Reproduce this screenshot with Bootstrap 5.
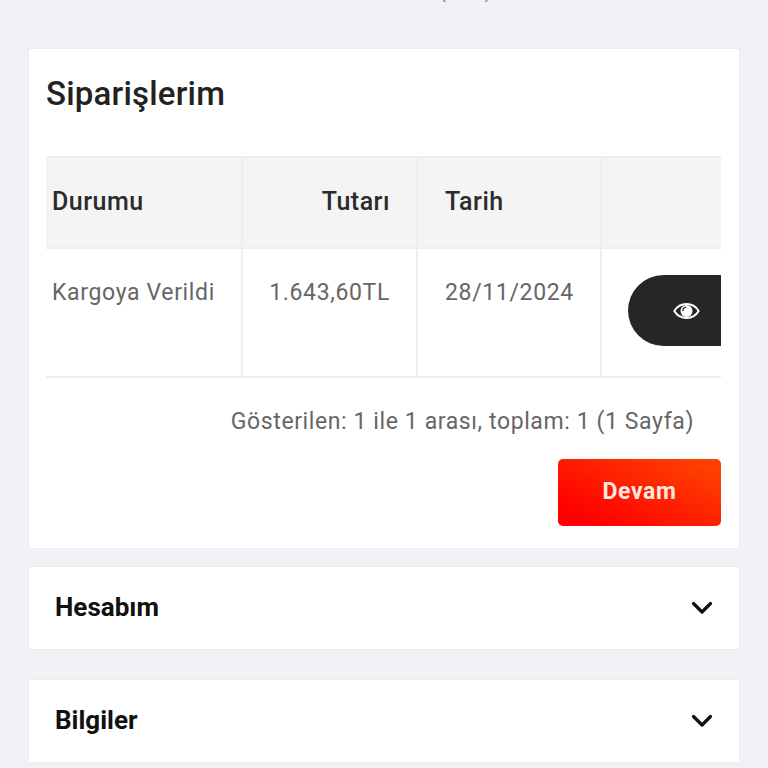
<!DOCTYPE html>
<html lang="tr">
<head>
    <meta charset="UTF-8">
    <meta name="viewport" content="width=device-width, initial-scale=1.0">
    <title>Siparişlerim</title>
    <link href="https://cdn.jsdelivr.net/npm/bootstrap@5.3.0/dist/css/bootstrap.min.css" rel="stylesheet">
    <style>
        html, body {
            height: 768px;
            overflow: hidden;
        }
        body {
            background: #f1f2f6;
            font-family: Roboto, "Liberation Sans", sans-serif;
            padding: 0 28px 0 28px;
        }
        .top-cut {
            height: 2px;
            margin-bottom: 46px;
            padding-left: 412px;
            gap: 37px;
            overflow: hidden;
            font-size: 20px;
            line-height: 20px;
            color: #888;
        }
        .panel-box {
            background: #fff;
            border: 1px solid #ebecef;
            border-radius: 2px;
        }
        .orders-box {
            height: 501px;
            padding: 0 17px;
            margin-bottom: 17px;
        }
        .orders-title {
            font-size: 33px;
            font-weight: 500;
            letter-spacing: .2px;
            color: #222;
            line-height: 38px;
            margin: 26px 0 43px;
        }
        .table-clip {
            width: 675px;
            overflow: hidden;
        }
        .orders-table {
            width: 720px;
            table-layout: fixed;
            margin: 0;
            border-collapse: collapse;
            font-size: 23px;
            letter-spacing: .65px;
        }
        .orders-table th, .orders-table td {
            border: 2px solid #eeeeee;
            border-left: 0;
            padding: 0;
            box-shadow: none;
        }
        .orders-table th {
            height: 91px;
            background: #f4f4f4;
            color: #2b2b2b;
            font-size: 25px;
            font-weight: 500;
            letter-spacing: .5px;
            vertical-align: middle;
            padding-bottom: 2px;
        }
        .orders-table td {
            height: 129px;
            color: #666;
            font-weight: 400;
            vertical-align: top;
            padding-top: 29px;
            line-height: 30px;
        }
        .cell-first { padding-left: 6px !important; }
        .cell-money { padding-right: 26px !important; text-align: right; }
        .cell-date { padding-left: 27px !important; }
        .view-btn {
            width: 150px;
            height: 71px;
            margin: -3px 0 0 26px;
            background: #262626;
            border: 0;
            border-radius: 36px;
            display: flex;
            align-items: center;
            padding: 0 0 0 45px;
        }
        .orders-info {
            font-size: 23px;
            letter-spacing: .6px;
            color: #666;
            line-height: 30px;
            margin: 29px 28px 22px 0;
            text-align: right;
        }
        .orders-foot {
            width: 675px;
        }
        .go-btn {
            width: 163px;
            height: 67px;
            background: linear-gradient(25deg, #ff0000 15%, #ff4000 90%);
            color: #fbe9e0;
            border: 0;
            border-radius: 5px;
            font-size: 23px;
            font-weight: 700;
            letter-spacing: .6px;
        }
        .menu-box {
            height: 84px;
            padding: 0 26px;
            margin-bottom: 29px;
        }
        .menu-box span {
            font-size: 26px;
            font-weight: 700;
            color: #111;
            padding-bottom: 2px;
        }
    </style>
</head>
<body>
    <div class="top-cut d-flex align-items-end"><span>(</span><span>)</span></div>

    <div class="panel-box orders-box">
        <h1 class="orders-title">Siparişlerim</h1>
        <div class="table-clip">
            <table class="table orders-table">
                <colgroup>
                    <col style="width: 196px">
                    <col style="width: 175px">
                    <col style="width: 184px">
                    <col style="width: 165px">
                </colgroup>
                <thead>
                    <tr>
                        <th class="cell-first">Durumu</th>
                        <th class="cell-money">Tutarı</th>
                        <th class="cell-date">Tarih</th>
                        <th></th>
                    </tr>
                </thead>
                <tbody>
                    <tr>
                        <td class="cell-first">Kargoya Verildi</td>
                        <td class="cell-money">1.643,60TL</td>
                        <td class="cell-date">28/11/2024</td>
                        <td>
                            <button class="view-btn" type="button" aria-label="Görüntüle">
                                <svg width="27" height="18" viewBox="0 0 27 18">
                                    <path d="M1.300 9C4 4.500 8.500 2 13.500 2s9.500 2.500 12.200 7c-2.700 4.500-7.200 7-12.200 7S4 13.500 1.300 9z" fill="none" stroke="#fff" stroke-width="2" stroke-linejoin="round"/>
                                    <circle cx="13.500" cy="9" r="6" fill="#fff"/>
                                    <path d="M9.800 9c0-2 1.500-3.600 3.400-3.800" fill="none" stroke="#262626" stroke-width="1.300"/>
                                </svg>
                            </button>
                        </td>
                    </tr>
                </tbody>
            </table>
        </div>
        <p class="orders-info">Gösterilen: 1 ile 1 arası, toplam: 1 (1 Sayfa)</p>
        <div class="orders-foot d-flex justify-content-end">
            <button class="btn go-btn" type="button">Devam</button>
        </div>
    </div>

    <div class="panel-box menu-box d-flex align-items-center justify-content-between">
        <span>Hesabım</span>
        <svg width="22" height="14" viewBox="0 0 22 14">
            <path d="M2.500 2.500l8.500 8.500 8.500-8.500" fill="none" stroke="#111" stroke-width="3.200" stroke-linecap="round" stroke-linejoin="round"/>
        </svg>
    </div>
    <div class="panel-box menu-box d-flex align-items-center justify-content-between">
        <span>Bilgiler</span>
        <svg width="22" height="14" viewBox="0 0 22 14">
            <path d="M2.500 2.500l8.500 8.500 8.500-8.500" fill="none" stroke="#111" stroke-width="3.200" stroke-linecap="round" stroke-linejoin="round"/>
        </svg>
    </div>

    <script src="https://cdn.jsdelivr.net/npm/bootstrap@5.3.0/dist/js/bootstrap.bundle.min.js"></script>
</body>
</html>
